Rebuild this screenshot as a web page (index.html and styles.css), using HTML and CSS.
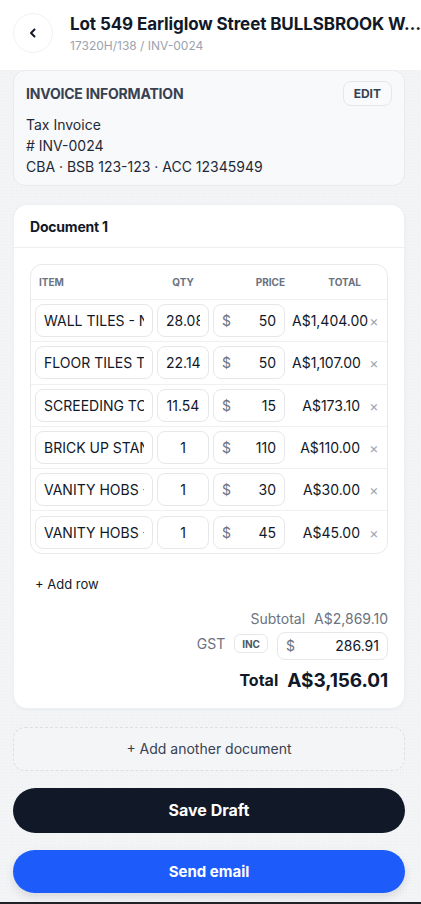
FILE: index.html
```html
<!DOCTYPE html>
<html>

<head>
    <title>Invoice</title>
    <meta name="viewport" content="width=device-width, initial-scale=1.0">
    <link rel="stylesheet" href="styles.css">
</head>

<body>
    <header class="topbar">
        <button class="back" aria-label="Back">
            <svg width="14" height="14" viewBox="0 0 14 14"><path d="M8.5 3.5 5 7l3.5 3.5" fill="none" stroke="#111827" stroke-width="2" stroke-linecap="round" stroke-linejoin="round"/></svg>
        </button>
        <div class="heading">
            <h1>Lot 549 Earliglow Street BULLSBROOK W…</h1>
            <p>17320H/138 / INV-0024</p>
        </div>
    </header>

    <main>
        <section class="info">
            <div class="info-head">
                <h2>Invoice information</h2>
                <button class="edit">EDIT</button>
            </div>
            <p>Tax Invoice</p>
            <p># INV-0024</p>
            <p>CBA · BSB 123-123 · ACC 12345949</p>
        </section>

        <section class="doc">
            <h3 class="doc-title">Document 1</h3>
            <div class="doc-body">
                <div class="lines">
                    <div class="line head">
                        <span>Item</span>
                        <span class="c">Qty</span>
                        <span class="r">Price</span>
                        <span class="r">Total</span>
                        <span></span>
                    </div>
                    <div class="line">
                        <input class="field" value="WALL TILES - NATURAL STONE">
                        <input class="field qty" value="28.08">
                        <label class="field price"><span>$</span><input value="50"></label>
                        <span class="total">A$1,404.00</span>
                        <button class="del">×</button>
                    </div>
                    <div class="line">
                        <input class="field" value="FLOOR TILES TO BATHROOM">
                        <input class="field qty" value="22.14">
                        <label class="field price"><span>$</span><input value="50"></label>
                        <span class="total">A$1,107.00</span>
                        <button class="del">×</button>
                    </div>
                    <div class="line">
                        <input class="field" value="SCREEDING TO FLOORS">
                        <input class="field qty" value="11.54">
                        <label class="field price"><span>$</span><input value="15"></label>
                        <span class="total">A$173.10</span>
                        <button class="del">×</button>
                    </div>
                    <div class="line">
                        <input class="field" value="BRICK UP STANDS">
                        <input class="field qty" value="1">
                        <label class="field price"><span>$</span><input value="110"></label>
                        <span class="total">A$110.00</span>
                        <button class="del">×</button>
                    </div>
                    <div class="line">
                        <input class="field" value="VANITY HOBS - ENSUITE">
                        <input class="field qty" value="1">
                        <label class="field price"><span>$</span><input value="30"></label>
                        <span class="total">A$30.00</span>
                        <button class="del">×</button>
                    </div>
                    <div class="line">
                        <input class="field" value="VANITY HOBS - BATHROOM">
                        <input class="field qty" value="1">
                        <label class="field price"><span>$</span><input value="45"></label>
                        <span class="total">A$45.00</span>
                        <button class="del">×</button>
                    </div>
                </div>

                <button class="add-row">+ Add row</button>

                <div class="sums">
                    <div class="sum-row muted"><span>Subtotal</span><span>A$2,869.10</span></div>
                    <div class="sum-row muted">
                        <span>GST</span>
                        <span class="badge">INC</span>
                        <label class="field gst"><span>$</span><input value="286.91"></label>
                    </div>
                    <div class="sum-row grand"><span>Total</span><strong>A$3,156.01</strong></div>
                </div>
            </div>
        </section>

        <button class="add-doc">+ Add another document</button>
        <button class="btn dark">Save Draft</button>
        <button class="btn blue">Send email</button>
    </main>
    <div class="bottom-edge"></div>
</body>

</html>
```

FILE: styles.css
```css
* { box-sizing: border-box; margin: 0; padding: 0; font-family: Inter, "Liberation Sans", sans-serif; }
body { background: #f3f4f6 radial-gradient(#eceef1 0.6px, transparent 0.7px); background-size: 3px 3px; color: #111827; min-height: 904px; }
button, input { font: inherit; color: inherit; background: none; border: none; outline: none; }

.topbar { background: #fff; height: 70px; display: flex; align-items: center; gap: 17px; padding: 0 16px 4px 13px; }
.back { width: 40px; height: 40px; flex: none; border-radius: 50%; border: 1px solid #f0f1f3; display: flex; align-items: center; justify-content: center; }
.heading { min-width: 0; }
.heading h1 { font-size: 17px; font-weight: 700; line-height: 22px; white-space: nowrap; letter-spacing: -0.1px; }
.heading p { font-size: 12px; line-height: 16px; color: #9ca3af; margin-top: 3px; }

main { padding: 0 16px 0 13px; display: flex; flex-direction: column; }

.info { background: rgba(250, 251, 252, 0.7); border: 1px solid #e8eaed; border-radius: 12px; padding: 10px 12px 8px; }
.info-head { display: flex; align-items: center; justify-content: space-between; margin-bottom: 8px; }
.info h2 { font-size: 14px; font-weight: 700; text-transform: uppercase; color: #374151; letter-spacing: -0.2px; }
.edit { font-size: 12px; font-weight: 700; color: #374151; border: 1px solid #e5e7eb; border-radius: 8px; height: 25px; padding: 0 10px; background: #f9fafb; }
.info p { font-size: 14px; line-height: 21px; color: #1f2937; }

.doc { margin-top: 18px; background: #fff; border-radius: 14px; border: 1px solid #eef0f2; box-shadow: 0 1px 3px rgba(0, 0, 0, 0.04); }
.doc-title { font-size: 14px; font-weight: 700; height: 43px; line-height: 43px; padding: 0 16px; border-bottom: 1px solid #eceef1; letter-spacing: -0.2px; }
.doc-body { padding: 16px 16px 16px; }

.lines { border: 1px solid #e7e9ec; border-radius: 12px; }
.line { display: grid; grid-template-columns: 118px 52px 72px minmax(0, 1fr) 18px; column-gap: 4px; align-items: center; padding: 4px 4px 4px 4px; height: 42.3px; border-top: 1px solid #eef0f2; }
.line.head { border-top: none; height: 34px; padding-top: 0; padding-bottom: 0; font-size: 10px; font-weight: 700; text-transform: uppercase; color: #6b7280; }
.line.head span:first-child { padding-left: 4px; }
.line.head .c { text-align: center; }
.line.head .r { text-align: right; }
.field { height: 33px; border: 1px solid #e5e7eb; border-radius: 8px; font-size: 14px; padding: 0 8px; color: #111827; width: 100%; }
.qty { text-align: center; padding: 0 8px; }
.price { display: flex; align-items: center; gap: 4px; }
.price span, .gst span { color: #6b7280; }
.price input, .gst input { min-width: 0; flex: 1; text-align: right; font-size: 14px; }
.total { font-size: 14px; text-align: right; color: #111827; padding: 0 1px 0 3px; white-space: nowrap; }
.del { color: #9ca3af; font-size: 14px; text-align: center; }

.add-row { font-size: 13px; margin: 21px 0 0 5px; height: 18px; align-self: flex-start; }

.sums { display: flex; flex-direction: column; align-items: flex-end; margin-top: 17px; }
.sum-row { display: flex; align-items: center; gap: 9px; }
.muted { color: #6b7280; font-size: 14px; }
.sum-row.muted:first-child { height: 18px; }
.badge { font-size: 10px; font-weight: 700; color: #4b5563; border: 1px solid #e5e7eb; border-radius: 6px; height: 19px; padding: 0 7px; display: flex; align-items: center; }
.gst { width: 111px; height: 28px; display: flex; align-items: center; gap: 4px; margin-top: 4px; }
.grand { margin-top: 9px; gap: 9px; }
.grand span { font-size: 16px; font-weight: 700; }
.grand strong { font-size: 19px; font-weight: 700; letter-spacing: -0.1px; }

.add-doc { margin-top: 18px; height: 44px; border: 1px dashed #dcdfe3; border-radius: 12px; font-size: 14px; color: #374151; background: #f4f5f7; }
.btn { height: 45px; border-radius: 999px; font-weight: 700; color: #fff; }
.dark { margin-top: 17px; background: #111827; font-size: 16px; }
.blue { margin-top: 17px; height: 43px; background: #1d5cfb; font-size: 15px; box-shadow: 0 4px 8px rgba(17, 24, 39, 0.12); }

.bottom-edge { position: fixed; left: 0; right: 0; bottom: 0; height: 2px; background: #1f2328; }
```
